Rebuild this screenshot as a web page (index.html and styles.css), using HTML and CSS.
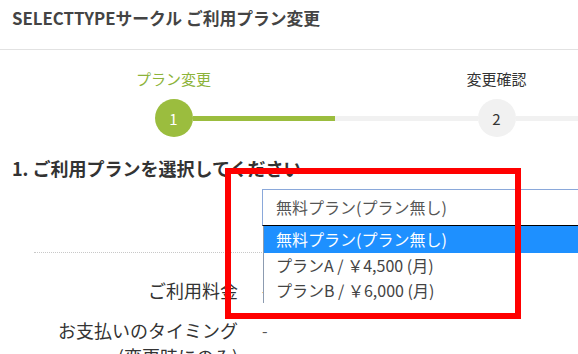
FILE: index.html
```html
<!DOCTYPE html>
<html lang="ja">
<head>
<meta charset="utf-8">
<title>SELECTTYPEサークル ご利用プラン変更</title>
<link rel="stylesheet" href="styles.css">
</head>
<body>
<header class="hdr"><h1>SELECTTYPEサークル ご利用プラン変更</h1></header>

<div class="steps">
  <ol>
    <li class="step active">
      <span class="step-label">プラン変更</span>
      <div class="track"><span class="seg none"></span><span class="dot">1</span><span class="seg on"></span></div>
    </li>
    <li class="step">
      <span class="step-label">変更確認</span>
      <div class="track"><span class="seg"></span><span class="dot">2</span><span class="seg"></span></div>
    </li>
  </ol>
</div>

<h2 class="sec-title">1. ご利用プランを選択してください</h2>

<div class="form">
  <div class="row row-select">
    <div class="lbl"></div>
    <div class="val">
      <div class="select">無料プラン(プラン無し)</div>
      <ul class="dropdown">
        <li class="sel">無料プラン(プラン無し)</li>
        <li>プランA / ￥4,500 (月)</li>
        <li>プランB / ￥6,000 (月)</li>
      </ul>
    </div>
  </div>
  <div class="row row-fee">
    <div class="lbl">ご利用料金</div>
    <div class="val">-</div>
  </div>
  <div class="row row-timing">
    <div class="lbl">お支払いのタイミング<br>(変更時にのみ)</div>
    <div class="val">-</div>
  </div>
</div>

<div class="annot"></div>
</body>
</html>
```
FILE: styles.css
```css
html, body {
  margin: 0;
  padding: 0;
  background: #fff;
}
body {
  width: 578px;
  height: 354px;
  overflow: hidden;
  position: relative;
  font-family: "Noto Sans CJK JP", "Noto Sans", sans-serif;
  color: #333;
}
.hdr {
  height: 49px;
  border-bottom: 1px solid #e2e2e2;
  padding: 0 12px;
}
.hdr h1 {
  margin: 0;
  padding-top: 7px;
  font-size: 16.8px;
  line-height: 22px;
  font-weight: 700;
  color: #444;
  white-space: nowrap;
}
.steps {
  padding: 19px 0 0 12px;
}
.steps ol {
  list-style: none;
  margin: 0;
  padding: 0;
  display: flex;
}
.step {
  width: 323px;
  flex: none;
  display: flex;
  flex-direction: column;
}
.step:last-child {
  flex: 1;
  width: auto;
}
.step-label {
  display: block;
  font-size: 15px;
  line-height: 20px;
  text-align: center;
  color: #333;
  margin-bottom: 10px;
}
.step:last-child .step-label {
  width: 323px;
}
.step.active .step-label {
  color: #8db33a;
}
.track {
  display: flex;
  align-items: center;
  height: 38px;
}
.seg {
  flex: 1;
  height: 5px;
  background: #f1f1f1;
}
.step:last-child .seg:first-child {
  flex: none;
  width: 142.5px;
}
.seg.none {
  background: transparent;
}
.seg.on {
  background: #9bbd3e;
}
.dot {
  flex: none;
  width: 38px;
  height: 38px;
  border-radius: 50%;
  background: #f1f1f1;
  display: flex;
  align-items: center;
  justify-content: center;
  font-size: 15px;
  color: #333;
}
.step.active .dot {
  background: #9bbd3e;
  color: #fff;
}
.sec-title {
  margin: 19px 0 0 12px;
  font-size: 18px;
  line-height: 24px;
  font-weight: 700;
  color: #333;
  white-space: nowrap;
}
.form {
  margin: 9px 0 0 34px;
}
.row {
  display: grid;
  grid-template-columns: 204px 1fr;
  column-gap: 24px;
}
.lbl {
  text-align: right;
  font-size: 18px;
  line-height: 26px;
  color: #333;
  white-space: nowrap;
}
.val {
  position: relative;
  font-size: 16px;
  line-height: 26px;
  color: #555;
}
.row-select {
  padding-bottom: 26px;
  border-bottom: 1px dotted #c8c8c8;
}
.row-fee {
  padding-top: 24px;
}
.row-timing {
  padding-top: 14px;
}
.select {
  width: 320px;
  height: 37px;
  box-sizing: border-box;
  border: 1px solid #8aa8da;
  border-bottom-color: #000;
  padding: 0 13px;
  font-size: 16px;
  line-height: 35px;
  color: #555;
  white-space: nowrap;
}
.dropdown {
  position: absolute;
  left: 1px;
  top: 37px;
  width: 319px;
  margin: 0;
  padding: 0;
  list-style: none;
  background: #fff;
  border-left: 1px solid #8c9bb0;
  z-index: 2;
}
.dropdown li {
  height: 25px;
  line-height: 25px;
  padding-left: 12px;
  font-size: 16px;
  color: #444;
  white-space: nowrap;
}
.dropdown li.sel {
  height: 27px;
  line-height: 27px;
  background: #1e90ff;
  color: #fff;
}
.annot {
  position: absolute;
  left: 225px;
  top: 168px;
  width: 296px;
  height: 151px;
  box-sizing: border-box;
  border: 6px solid #f00;
  z-index: 5;
}
```
